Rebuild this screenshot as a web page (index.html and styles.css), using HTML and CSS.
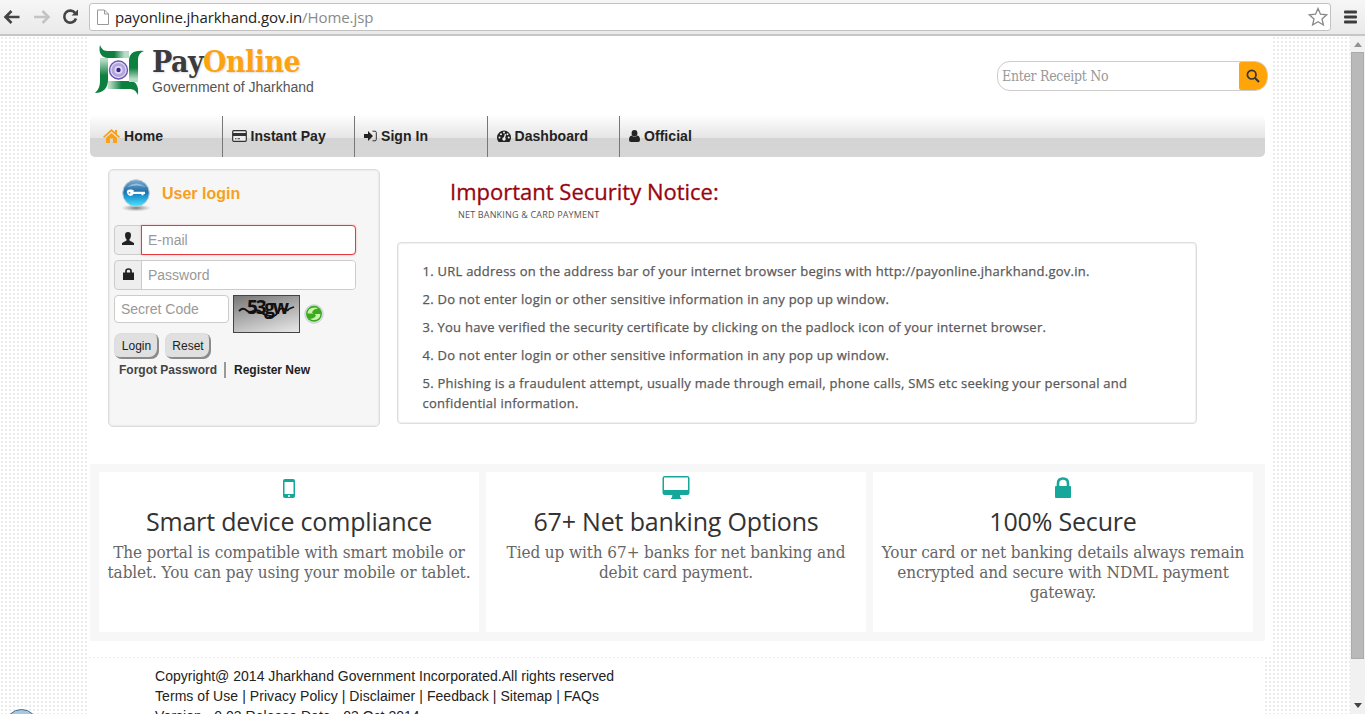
FILE: index.html
```html
<!DOCTYPE html>
<html lang="en">
<head>
<meta charset="utf-8">
<title>PayOnline - Government of Jharkhand</title>
<link rel="stylesheet" href="styles.css">
</head>
<body>
<div class="toolbar">
  <svg class="tool-icons" width="88" height="34" viewBox="0 0 88 34" fill="none" stroke-width="2.6">
    <path d="M19.500 17H6M11.500 11L5.500 17l6 6" stroke="#444"/>
    <path d="M34 17h14M42.500 11l6 6l-6 6" stroke="#c4c4c4"/>
    <path d="M75.300 13.300A6 6 0 1 0 76 18.500" stroke="#444"/>
    <path d="M71.500 15.600h6.500V9.500z" fill="#444"/>
  </svg>
  <div class="address">
    <svg width="14" height="17" viewBox="0 0 14 17" fill="#fff" stroke="#999"><path d="M1.500 1h7l4 4v10.500h-11zM8.500 1v4h4"/></svg>
    <span class="url"><b>payonline.jharkhand.gov.in</b>/Home.jsp</span>
    <svg class="star" width="20" height="20" viewBox="0 0 20 20" fill="#fff" stroke="#888" stroke-width="1.300"><path d="M10 1.500l2.500 5.700 6.200.6-4.700 4.100 1.400 6.100L10 14.800 4.600 18 6 11.900 1.300 7.800l6.200-.6z"/></svg>
  </div>
  <svg class="menu" width="14" height="14" viewBox="0 0 14 14" fill="#3c3c3c"><rect y="0.500" width="13" height="3" rx="1"/><rect y="5.500" width="13" height="3" rx="1"/><rect y="10.500" width="13" height="3" rx="1"/></svg>
</div>
<div class="viewport">
  <div class="page">
    <header class="header">
      <svg class="logo" width="50" height="52" viewBox="0 0 50 52">
        <defs>
          <linearGradient id="fadeTop"><stop offset=".5" stop-color="#0d8040"/><stop offset=".85" stop-color="#b9dcc6"/></linearGradient>
          <linearGradient id="fadeRight" x1="0" y1="0" x2="0" y2="1"><stop offset=".55" stop-color="#0d8040"/><stop offset=".9" stop-color="#b9dcc6"/></linearGradient>
          <linearGradient id="fadeBottom" x1="1" x2="0"><stop offset=".55" stop-color="#0d8040"/><stop offset=".95" stop-color="#b9dcc6"/></linearGradient>
          <linearGradient id="fadeLeft" x1="0" y1="1" x2="0" y2="0"><stop offset=".5" stop-color="#0d8040"/><stop offset=".95" stop-color="#b9dcc6"/></linearGradient>
        </defs>
        <path d="M5 14h8v22c0 7-4 13-13 13 4-4 5-7 5-13z" fill="url(#fadeLeft)"/>
        <path d="M13 37h22c6 0 9 5 8 14-2-4-4-6-9-6H13z" fill="url(#fadeBottom)"/>
        <path d="M34 38V17c0-7 4-11 15-10-5 2-6 5-6 10v21z" fill="url(#fadeRight)"/>
        <path d="M5 1c2 5 4 6 9 6h20v7H13C7 14 3 9 5 1z" fill="url(#fadeTop)"/>
        <circle cx="23.500" cy="26" r="10.500" fill="#fff"/>
        <circle cx="23.500" cy="26" r="9" fill="#e0dbf2" stroke="#6a55b5" stroke-width="1.400"/>
        <circle cx="23.500" cy="26" r="5.500" fill="none" stroke="#b3a6dc" stroke-width="3"/>
        <circle cx="23.500" cy="26" r="2.200" fill="#37218c"/>
      </svg>
      <div class="brand">
        <div class="brand-name">Pay<span>Online</span></div>
        <div class="brand-sub">Government of Jharkhand</div>
      </div>
      <div class="receipt">
        <span>Enter Receipt No</span>
        <i><svg width="14" height="14" viewBox="0 0 14 14" fill="none" stroke="#333"><circle cx="5.700" cy="5.700" r="4.300" stroke-width="1.700"/><path d="M9 9l4 4" stroke-width="2.200"/></svg></i>
      </div>
    </header>
    <nav class="nav">
      <a><svg width="17" height="15" viewBox="0 0 17 15" fill="#f9a11b"><path d="M8.500 0L12 3V1h2v4l3 2.700-1.200 1.200L8.500 2.600 1.200 8.900 0 7.700zM8.500 4L14 8.700V14H10V9.500H7V14H3V8.700z"/></svg><span>Home</span></a>
      <a><svg width="15" height="12" viewBox="0 0 15 12"><rect x=".7" y=".7" width="13.600" height="10.600" rx="1" fill="#eee" stroke="#333" stroke-width="1.200"/><path d="M1 3h13v3H1zM3 8.300h1.500v1H3zM5.500 8.300H8v1H5.500z" fill="#333"/></svg><span>Instant Pay</span></a>
      <a><svg width="13" height="12" viewBox="0 0 13 12"><path d="M0 4h4V1l5 5-5 5V8H0z" fill="#222"/><path d="M8.500 1.200H11q1.300 0 1.300 1.300v7q0 1.300-1.300 1.300H8.500" fill="none" stroke="#333"/></svg><span>Sign In</span></a>
      <a><svg width="14" height="12" viewBox="0 0 14 12"><path d="M1.600 12A7 7 0 1 1 12.400 12z" fill="#222"/><path d="M7 9.500L8.500 4" stroke="#eee" stroke-width="1.300"/><g fill="#eee"><circle cx="7" cy="9" r="1.700"/><circle cx="2.500" cy="7.500" r="1"/><circle cx="4" cy="4.200" r="1"/><circle cx="7" cy="2.600" r="1"/><circle cx="10.500" cy="4.200" r="1"/><circle cx="11.700" cy="7.500" r="1"/></g></svg><span>Dashboard</span></a>
      <a><svg width="11" height="12" viewBox="0 0 11 12" fill="#222"><ellipse cx="5.500" cy="3.200" rx="2.900" ry="3.200"/><path d="M2.500 5.500q3 2.500 6 0Q11 6 11 10q0 2-2 2H2q-2 0-2-2 0-4 2.500-4.500z"/></svg><span>Official</span></a>
    </nav>
    <main class="main">
      <section class="login">
        <div class="login-head">
          <svg width="31" height="34" viewBox="0 0 31 34">
            <defs>
              <linearGradient id="orb" x1="0" y1="0" x2="0" y2="1"><stop offset="0" stop-color="#7aaed3"/><stop offset=".45" stop-color="#246fa9"/><stop offset=".6" stop-color="#1c93cf"/><stop offset="1" stop-color="#4be3fb"/></linearGradient>
              <radialGradient id="shade"><stop offset="0" stop-color="#777"/><stop offset="1" stop-color="#999" stop-opacity="0"/></radialGradient>
            </defs>
            <ellipse cx="15" cy="30" rx="15" ry="3.500" fill="url(#shade)"/>
            <circle cx="15" cy="15" r="13.300" fill="url(#orb)" stroke="#b7cbd8" stroke-width="1"/>
            <path d="M6 9Q15 2 25 9q-9-3-19 0z" fill="#fff" opacity=".4"/>
            <path d="M12.500 13.700H24v2.300h-1.500v1.200h-2V16h-8q-1 2-3.200 2T6 14.900t3.300-3.300 3.200 2.100z" fill="#fff"/><circle cx="8.500" cy="14.800" r=".9" fill="#3b8fc0"/>
          </svg>
          <h2>User login</h2>
        </div>
        <div class="field error"><i><svg width="12" height="13" viewBox="0 0 12 13" fill="#222"><path d="M6 0q3 0 3 3.300Q9 6 7.500 7.300v1.200L12 11v2H0v-2l4.500-2.500V7.300Q3 6 3 3.300 3 0 6 0z"/></svg></i><span>E-mail</span></div>
        <div class="field"><i><svg width="11" height="12" viewBox="0 0 11 12"><path d="M3 6V3q0-2 2.500-2T8 3v3" fill="none" stroke="#222" stroke-width="1.700"/><rect y="4.500" width="11" height="7.500" fill="#222"/></svg></i><span>Password</span></div>
        <div class="code-row">
          <div class="code">Secret Code</div>
          <div class="captcha">
            <svg width="65" height="36" viewBox="0 0 65 36"><text x="13" y="18" class="cap-text" textLength="42">53gw</text><path d="M5 15q4-4 7-1t7 1q5-2 8 1t9 4 8-4 6-3 4 1 6-3" fill="none" stroke="#111" stroke-width="1.800"/></svg>
          </div>
          <svg class="refresh" width="20" height="20" viewBox="0 0 20 20"><circle cx="10" cy="10" r="9.200" fill="#e3e8ee" stroke="#c4cad4"/><circle cx="10" cy="9.800" r="8" fill="#3caa20"/><path d="M3.500 9.500q.5-6 7-6 2 0 3.500 1.200-5 0-6 3.800l1.500 1zM16.500 10q-.5 6-7 6-2 0-3.500-1.200 5 0 6-3.800l-1.500-1z" fill="#c9f5a8"/></svg>
        </div>
        <div class="buttons"><button>Login</button><button>Reset</button></div>
        <div class="links"><span>Forgot Password</span><b></b><span class="register">Register New</span></div>
      </section>
      <section class="notice">
        <h1>Important Security Notice:</h1>
        <div class="sub">NET BANKING &amp; CARD PAYMENT</div>
        <div class="rules">
          <p>1. URL address on the address bar of your internet browser begins with http://payonline.jharkhand.gov.in.</p>
          <p>2. Do not enter login or other sensitive information in any pop up window.</p>
          <p>3. You have verified the security certificate by clicking on the padlock icon of your internet browser.</p>
          <p>4. Do not enter login or other sensitive information in any pop up window.</p>
          <p>5. Phishing is a fraudulent attempt, usually made through email, phone calls, SMS etc seeking your personal and<br>confidential information.</p>
        </div>
      </section>
    </main>
    <section class="cards">
      <article>
        <svg width="28" height="30" viewBox="0 0 28 30"><rect x="8" y="7" width="12" height="19" rx="2" fill="#16a79b"/><path d="M9.500 10h9v12h-9z" fill="#fff"/><circle cx="14" cy="24" r="1.100" fill="#fff"/></svg>
        <h3>Smart device compliance</h3>
        <p>The portal is compatible with smart mobile or<br>tablet. You can pay using your mobile or tablet.</p>
      </article>
      <article>
        <svg width="28" height="30" viewBox="0 0 28 30"><path fill-rule="evenodd" d="M3 4h22q2.500 0 2.500 2v14.500q0 2.500-2.500 2.500h-7l.3 2.500 1 .5v1H9v-1l1-.5.3-2.500H3Q.5 23 .5 20.500V6Q.5 4 3 4zM2 5.500V18h24V5.500z" fill="#16a79b"/></svg>
        <h3>67+ Net banking Options</h3>
        <p>Tied up with 67+ banks for net banking and<br>debit card payment.</p>
      </article>
      <article>
        <svg width="28" height="30" viewBox="0 0 28 30"><path d="M9 15V11.500Q9 6.500 14 6.500t5 5V15" fill="none" stroke="#16a79b" stroke-width="2.600"/><rect x="6" y="14" width="16" height="12" rx="1" fill="#16a79b"/></svg>
        <h3>100% Secure</h3>
        <p>Your card or net banking details always remain<br>encrypted and secure with NDML payment<br>gateway.</p>
      </article>
    </section>
  </div>
  <footer class="footer">
    <div>Copyright@ 2014 Jharkhand Government Incorporated.All rights reserved</div>
    <div class="footer-links">Terms of Use | Privacy Policy | Disclaimer | Feedback | Sitemap | FAQs</div>
    <div>Version - 0.03 Release Date - 03 Oct 2014</div>
  </footer>
  <div class="scrollbar">
    <svg width="8" height="5" viewBox="0 0 8 5"><path d="M0 5l4-5 4 5z" fill="#929292"/></svg>
    <div class="thumb"></div>
    <svg class="down" width="8" height="5" viewBox="0 0 8 5"><path d="M0 0l4 5 4-5z" fill="#444"/></svg>
  </div>
  <div class="orb"></div>
</div>
</body>
</html>
```
FILE: styles.css
```css
* { box-sizing: border-box; }
html, body { margin: 0; height: 100%; overflow: hidden; }
body { font-family: "Liberation Sans", Arial, sans-serif; color: #222; white-space: nowrap; }
svg { display: block; flex: none; }
h1, h2, h3, p { margin: 0; font-weight: 400; }

/* Browser toolbar */
.toolbar { height: 36px; display: flex; align-items: flex-start; background: linear-gradient(#f6f6f6, #eaeaea); border-bottom: 2px solid #c6c6c6; }
.tool-icons { width: 88px; }
.address { width: 1242px; height: 28px; margin: 3px 0 0 1px; border: 1px solid #c2c2c2; border-radius: 3px; background: #fff; display: flex; align-items: center; padding: 0 2px 0 6px; }
.url { font: 15px/26px "Open Sans", sans-serif; color: #8a8a8a; margin-left: 5px; letter-spacing: -0.08px; }
.url b { font-weight: 400; color: #222; }
.star { margin-left: auto; }
.menu { margin: 10px 0 0 13px; }

/* Page area */
.viewport { position: relative; height: 678px; overflow: hidden; background: radial-gradient(circle at 2px 2px, #ebebeb 0.8px, transparent 1.1px) 0 0 / 4px 4px #fff; }
.page { margin-left: 87px; width: 1184px; height: 620px; background: #fff; padding: 0 6px 0 3px; }

.header { height: 80px; display: flex; padding: 8px 0 0 5px; }
.brand { margin-left: 7px; }
.brand-name { font: 700 30px/36px "DejaVu Serif Condensed", "DejaVu Serif", serif; color: #3b3b3d; letter-spacing: -0.55px; text-shadow: 1px 1px 2px #ddd; }
.brand-name span { color: #fca311; }
.brand-sub { font-size: 14px; line-height: 14px; color: #555; }
.receipt { margin: 17px -3px 0 auto; width: 271px; height: 30px; border: 1px solid #ccc; border-radius: 13px; display: flex; align-items: center; justify-content: space-between; font: 14px "DejaVu Serif Condensed", "DejaVu Serif", serif; color: #999; padding-left: 4px; }
.receipt span { letter-spacing: -0.3px; }
.receipt i { width: 28px; height: 28px; background: #ffa50a; border-radius: 2px 12px 12px 2px; display: grid; place-items: center; }

.nav { width: 1175px; height: 41px; display: flex; border-radius: 5px; background: linear-gradient(#fdfdfd 0, #e5e5e5 54%, #d4d4d4 54%, #d6d6d6 100%); }
.nav a { width: 132.500px; display: flex; align-items: center; gap: 4px; padding: 0 0 1px 9px; border-right: 1px solid #777; font-size: 14px; font-weight: 700; letter-spacing: 0.05px; }
.nav span { margin-top: -1px; }
.nav a:first-child { padding-left: 13px; }
.nav a:last-child { border: 0; }

.main { height: 307px; display: flex; padding: 12px 0 0 18px; }
.login { width: 272px; height: 258px; border: 1px solid #dcdcdc; border-radius: 5px; background: #f6f6f6; box-shadow: inset 0 0 1px 1px #ececec; padding: 8px 0 0 5px; }
.login-head { display: flex; gap: 10px; height: 47px; padding-left: 7px; }
.login-head h2 { font-size: 16px; line-height: 32px; font-weight: 700; color: #f7a01d; }
.field { display: flex; width: 242px; height: 30px; margin-bottom: 5px; border: 1px solid #ccc; border-radius: 4px; background: #eee; font-size: 14px; color: #999; }
.field i { width: 26px; display: grid; place-items: center; padding-bottom: 3px; }
.field span { flex: 1; line-height: 28px; padding-left: 6px; background: #fff; border-left: 1px solid #ccc; border-radius: 0 3px 3px 0; }
.error span { margin: -1px -1px -1px 0; border: 1px solid #e8393e; border-radius: 0 4px 4px 0; box-shadow: 0 0 2px #f5a0a0; }
.code-row { display: flex; height: 38px; }
.code { width: 115px; height: 28px; border: 1px solid #ccc; border-radius: 4px; background: #fff; color: #999; font-size: 14px; line-height: 27px; padding-left: 6px; }
.captcha { margin-left: 4px; width: 67px; height: 38px; border: 1px solid #444; background: linear-gradient(165deg, #777, #aaa 45%, #e8e8e8); }
.cap-text { font: 700 19px "Open Sans", sans-serif; fill: #111; }
.refresh { margin: 9px 0 0 4px; }
.buttons { display: flex; gap: 6px; }
.buttons button { width: 45px; height: 26px; padding: 0 0 1px; font: 12px "Liberation Sans", sans-serif; color: #222; background: #e0e0e0; border: 0; border-radius: 8px; box-shadow: inset -2px -2px 0 #8b8b8b, inset 1px 1px 0 #ddd; }
.buttons button + button { width: 46px; }
.links { display: flex; align-items: center; height: 22px; padding-left: 5px; font-size: 12px; font-weight: 700; color: #444; }
.links b { width: 2px; height: 16px; background: #999; margin: 0 8px 0 7px; }
.register { color: #222; }

.notice { margin-left: 17px; width: 800px; }
.notice h1 { font: 22px/30px "Open Sans", sans-serif; color: #980510; padding: 7px 0 0 53px; -webkit-text-stroke: 0.3px #980510; }
.sub { font: 9px/14px "Open Sans", sans-serif; color: #555; padding-left: 61px; margin-top: 2px; letter-spacing: 0.18px; }
.rules { margin-top: 20px; height: 182px; border: 1px solid #dedede; border-radius: 4px; box-shadow: inset 0 0 1px 1px #f0f0f0; padding: 18px 0 0 24.500px; font: 13px/20px "Open Sans", sans-serif; color: #595959; letter-spacing: 0.25px; -webkit-text-stroke: 0.25px #595959; }
.rules p { margin-bottom: 8px; }

.cards { width: 1175px; height: 177px; background: #f7f7f7; display: flex; gap: 7px; padding: 8px 8px 9px 9px; }
.cards article { width: 380px; height: 160px; background: #fff; display: flex; flex-direction: column; align-items: center; text-align: center; }
.cards h3 { font: 25px/34px "Open Sans", sans-serif; color: #333; margin-top: 2px; letter-spacing: -0.18px; }
.cards p { font: 17px/20px "DejaVu Serif Condensed", "DejaVu Serif", serif; color: #666; margin-top: 4px; letter-spacing: -0.1px; }

.footer { margin: 2px 0 0 89px; width: 1174px; height: 60px; padding: 8px 0 0 66px; background: #fff; font-size: 14px; line-height: 20px; color: #222; letter-spacing: 0.02px; }
.footer-links { letter-spacing: 0.06px; }

.scrollbar { position: absolute; top: 0; right: 0; width: 15px; height: 678px; background: #f1f1f1; display: flex; flex-direction: column; align-items: center; padding-top: 6px; }
.thumb { width: 13px; height: 607px; margin-top: 5px; background: #b9b9b9; border: 1px solid #ababab; }
.down { margin-top: 44px; }
.orb { position: absolute; left: 5px; top: 673px; width: 33px; height: 33px; border-radius: 50%; background: #a9c7df; border: 1px solid #4a6f94; }
```
